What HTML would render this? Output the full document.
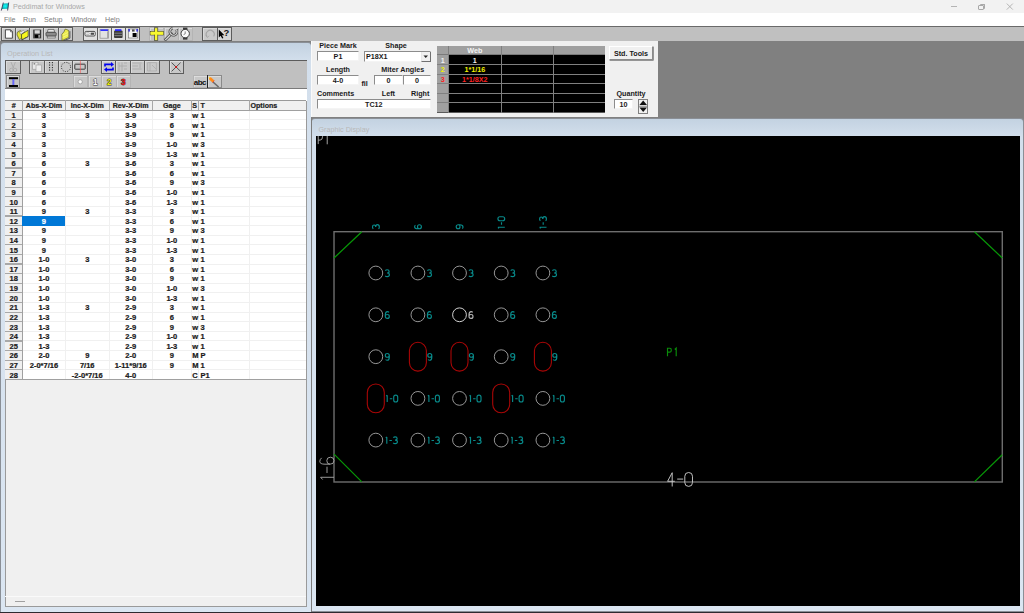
<!DOCTYPE html><html><head><meta charset="utf-8"><title>Peddimat for Windows</title><style>
*{margin:0;padding:0;box-sizing:border-box}
html,body{width:1024px;height:613px;overflow:hidden;background:#808080;font-family:"Liberation Sans",sans-serif}
.a{position:absolute}
.t{position:absolute;white-space:nowrap;line-height:1}
.b{-webkit-text-stroke:0.2px currentColor}
.btn{position:absolute;background:#c8c8c8;border:1px solid #5a5a5a;box-shadow:inset 1px 1px 0 #e8e8e8}
.frame{position:absolute;background:linear-gradient(#c3d2e1,#d3dfec 18px,#dbe6f2);border:1px solid #8a8f96;border-radius:4px 4px 0 0}
.tb td{}
</style></head><body>
<div class="a" style="left:0;top:0;width:1024px;height:13px;background:#f2f2f2"></div>
<svg class="a" style="left:0;top:0" width="12" height="13" viewBox="0 0 12 13"><defs><radialGradient id="tg" cx="0.5" cy="0.5" r="0.6"><stop offset="0" stop-color="#10ffff"/><stop offset="1" stop-color="#10a8a8"/></radialGradient></defs><path d="M3.1 3.6 L8.9 3.3 L8.1 8.7 L1.7 8.9 Z" fill="url(#tg)"/><path d="M3.3 2.6 L1.3 10.6 M8.7 2.5 L7.6 10.5" stroke="#3a3a5a" stroke-width="0.9" fill="none"/></svg>
<div class="t" style="left:12.6px;top:2.9px;font-size:7.7px;color:#a8a8a8;transform:scaleX(0.935);transform-origin:0 0">Peddimat for Windows</div>
<div class="a" style="left:951px;top:6.1px;width:6.2px;height:1px;background:#b4b4b4"></div>
<div class="a" style="left:978px;top:5px;width:6px;height:5px;border:1px solid #a8a8a8;border-radius:1px"></div>
<div class="a" style="left:980px;top:4px;width:5px;height:5px;border-top:1px solid #a8a8a8;border-right:1px solid #a8a8a8;border-radius:1px"></div>
<svg class="a" style="left:1006px;top:3px" width="8" height="8"><path d="M0.8 0.6 L6.8 6.6 M6.8 0.6 L0.8 6.6" stroke="#a6a6a6" stroke-width="0.8"/></svg>
<div class="a" style="left:0;top:12.7px;width:1024px;height:13px;background:#fff"></div>
<div class="t" style="left:3.90px;top:15.8px;font-size:7.9px;color:#7a7a7a;transform:scaleX(0.9);transform-origin:0 0">File</div>
<div class="t" style="left:23.20px;top:15.8px;font-size:7.9px;color:#7a7a7a;transform:scaleX(0.9);transform-origin:0 0">Run</div>
<div class="t" style="left:44.40px;top:15.8px;font-size:7.9px;color:#7a7a7a;transform:scaleX(0.9);transform-origin:0 0">Setup</div>
<div class="t" style="left:70.50px;top:15.8px;font-size:7.9px;color:#7a7a7a;transform:scaleX(0.9);transform-origin:0 0">Window</div>
<div class="t" style="left:105.30px;top:15.8px;font-size:7.9px;color:#7a7a7a;transform:scaleX(0.9);transform-origin:0 0">Help</div>
<div class="a" style="left:0;top:26.5px;width:1024px;height:14.7px;background:#c0c0c0"></div>
<div class="a" style="left:1.00px;top:26.80px;width:15.00px;height:14.00px;background:#c8c8c8;border:1.2px solid #5c5c5c;box-shadow:inset 0.7px 0.7px 0 #e2e2e2"></div>
<svg class="a" style="left:1.60px;top:26.80px" width="13.80" height="14.00" viewBox="0 0 13.80 14.00"><path d="M3.4 2.8 L8.6 2.8 L10.4 4.6 L10.4 11.2 L3.4 11.2 Z" fill="#fff" stroke="#3a3a3a" stroke-width="0.9" stroke-linejoin="round"/><path d="M8.4 2.8 L8.6 4.8 L10.4 4.8" fill="none" stroke="#3a3a3a" stroke-width="0.7"/></svg>
<div class="a" style="left:14.80px;top:26.80px;width:15.50px;height:14.00px;background:#c8c8c8;border:1.2px solid #5c5c5c;box-shadow:inset 0.7px 0.7px 0 #e2e2e2"></div>
<svg class="a" style="left:15.40px;top:26.80px" width="14.30" height="14.00" viewBox="0 0 14.30 14.00"><path d="M2.2 5.4 L5.2 3.6 L6.8 4.6 L7 11 L4.4 12.6 L2 8 Z" fill="#e8e830" stroke="#3a3a20" stroke-width="0.6"/><path d="M4.4 5.2 L8.4 3.4 L9.6 4.6 L6 7.6 Z" fill="#e6e6e6" stroke="#707070" stroke-width="0.5"/><path d="M6.4 7.4 L13.2 3.2 L13.2 9.6 L6.8 13 Z" fill="#f8f81c" stroke="#3a3a20" stroke-width="0.7"/><path d="M7 12.6 L13 9.4" stroke="#303060" stroke-width="0.8" stroke-dasharray="1 0.8"/></svg>
<div class="a" style="left:29.10px;top:26.80px;width:15.50px;height:14.00px;background:#c8c8c8;border:1.2px solid #5c5c5c;box-shadow:inset 0.7px 0.7px 0 #e2e2e2"></div>
<svg class="a" style="left:29.70px;top:26.80px" width="14.30" height="14.00" viewBox="0 0 14.30 14.00"><rect x="3.2" y="2.6" width="8" height="8.8" fill="#3c3c3c"/><rect x="4.6" y="3.2" width="5.2" height="3.4" fill="#d8d8d8"/><rect x="5" y="7.8" width="3.2" height="3" fill="#000"/><rect x="8.4" y="8" width="1.6" height="2.6" fill="#9a9a9a"/></svg>
<div class="a" style="left:43.40px;top:26.80px;width:15.80px;height:14.00px;background:#c8c8c8;border:1.2px solid #5c5c5c;box-shadow:inset 0.7px 0.7px 0 #e2e2e2"></div>
<svg class="a" style="left:44.00px;top:26.80px" width="14.60" height="14.00" viewBox="0 0 14.60 14.00"><path d="M4 2.4 L10 2.4 L10.6 5.2 L3.4 5.2 Z" fill="#e6e6e6" stroke="#505050" stroke-width="0.7"/><rect x="2" y="5.4" width="10.2" height="3.6" rx="0.8" fill="#8a8a8a" stroke="#3a3a3a" stroke-width="0.7"/><rect x="3.2" y="9.2" width="8" height="1.8" fill="#e0e0e0" stroke="#505050" stroke-width="0.6"/></svg>
<div class="a" style="left:58.00px;top:26.80px;width:15.20px;height:14.00px;background:#c8c8c8;border:1.2px solid #5c5c5c;box-shadow:inset 0.7px 0.7px 0 #e2e2e2"></div>
<svg class="a" style="left:58.60px;top:26.80px" width="14.00" height="14.00" viewBox="0 0 14.00 14.00"><g transform="translate(-1.4,0)"><path d="M4.2 7.2 L6.4 4.8 L7.6 2 L9.2 2.6 L11.2 3.6 L11.2 10.4 L4.4 13.6 Z" fill="#ecec4a" stroke="#4a4a20" stroke-width="0.6"/><path d="M5 8 L10.6 5.4 M5 10.4 L10.6 7.8" stroke="#f8f8a0" stroke-width="0.6"/><path d="M12.3 4.2 L12.3 11.2 L6 13.8" stroke="#4a4a4a" stroke-width="0.9" fill="none"/></g></svg>
<div class="a" style="left:82.60px;top:26.80px;width:15.30px;height:14.00px;background:#e0e0e0;border:1.2px solid #5c5c5c;box-shadow:inset 0.7px 0.7px 0 #e2e2e2"></div>
<svg class="a" style="left:83.20px;top:26.80px" width="14.10" height="14.00" viewBox="0 0 14.10 14.00"><rect x="2" y="4.4" width="10.2" height="4.6" rx="1.2" fill="#fff" stroke="#3a3a3a" stroke-width="0.9"/><rect x="7.6" y="5.6" width="3.4" height="2.2" fill="#4a4a4a"/><rect x="3.2" y="5.8" width="3.4" height="1.8" fill="#e0e0e0" stroke="#888" stroke-width="0.4"/></svg>
<div class="a" style="left:96.70px;top:26.80px;width:15.30px;height:14.00px;background:#e0e0e0;border:1.2px solid #5c5c5c;box-shadow:inset 0.7px 0.7px 0 #e2e2e2"></div>
<svg class="a" style="left:97.30px;top:26.80px" width="14.10" height="14.00" viewBox="0 0 14.10 14.00"><rect x="3" y="2.6" width="8.4" height="8.6" fill="#e2e2e2" stroke="#8a8a8a" stroke-width="0.7"/><rect x="3.4" y="2.4" width="7.6" height="1.6" fill="#3030ff"/><path d="M10.6 4.4 L10.6 11" stroke="#9a9a9a" stroke-width="0.9"/></svg>
<div class="a" style="left:110.80px;top:26.80px;width:15.70px;height:14.00px;background:#e0e0e0;border:1.2px solid #5c5c5c;box-shadow:inset 0.7px 0.7px 0 #e2e2e2"></div>
<svg class="a" style="left:111.40px;top:26.80px" width="14.50" height="14.00" viewBox="0 0 14.50 14.00"><rect x="3" y="3.4" width="8.6" height="7.6" rx="1" fill="#3a3a3a"/><rect x="4" y="2.2" width="6.4" height="1.8" fill="#2828ff"/><path d="M3.4 6.2 L11.2 6.2 M3.4 8.6 L11.2 8.6" stroke="#b0b0b0" stroke-width="0.6"/></svg>
<div class="a" style="left:125.30px;top:26.80px;width:14.90px;height:14.00px;background:#e0e0e0;border:1.2px solid #5c5c5c;box-shadow:inset 0.7px 0.7px 0 #e2e2e2"></div>
<svg class="a" style="left:125.90px;top:26.80px" width="13.70" height="14.00" viewBox="0 0 13.70 14.00"><rect x="2.4" y="2" width="9.4" height="9" fill="#f4f4f4" stroke="#6a6a6a" stroke-width="0.6"/><rect x="2.4" y="2" width="1.4" height="2.6" fill="#2020e0"/><rect x="10.4" y="2" width="1.4" height="2.6" fill="#2020e0"/><rect x="6" y="2.4" width="2.6" height="2.2" fill="#505050"/><rect x="6.6" y="6" width="4" height="4" fill="#000"/></svg>
<div class="a" style="left:148.70px;top:26.80px;width:15.80px;height:14.00px;background:#c2c2c2;border:1px solid #b4b4b4;box-shadow:inset 0.7px 0.7px 0 #e2e2e2"></div>
<svg class="a" style="left:149.20px;top:26.80px" width="14.80" height="14.00" viewBox="0 0 14.80 14.00"><rect x="1.2" y="4.4" width="13.4" height="3.6" fill="#f8f830" stroke="#2a2a2a" stroke-width="0.6"/><rect x="5.6" y="0.8" width="3.2" height="12.6" fill="#f8f830" stroke="#2a2a2a" stroke-width="0.6"/><rect x="1.6" y="4.8" width="12.6" height="2.8" fill="#f8f830"/></svg>
<div class="a" style="left:163.50px;top:26.80px;width:15.40px;height:14.00px;background:#c2c2c2;border:1px solid #b4b4b4;box-shadow:inset 0.7px 0.7px 0 #e2e2e2"></div>
<svg class="a" style="left:164.00px;top:26.80px" width="14.40" height="14.00" viewBox="0 0 14.40 14.00"><path d="M1.6 12.6 L7.4 6.8" stroke="#4a4a4a" stroke-width="2.8" stroke-linecap="round"/><path d="M1.6 12.6 L7.4 6.8" stroke="#dadada" stroke-width="1.3" stroke-linecap="round"/><path d="M12.4 2.6 A3.6 3.6 0 1 1 8.6 1.2" fill="none" stroke="#4a4a4a" stroke-width="2.6"/><path d="M12.4 2.6 A3.6 3.6 0 1 1 8.6 1.2" fill="none" stroke="#d6d6d6" stroke-width="1.1"/></svg>
<div class="a" style="left:177.90px;top:26.80px;width:14.80px;height:14.00px;background:#c2c2c2;border:1px solid #b4b4b4;box-shadow:inset 0.7px 0.7px 0 #e2e2e2"></div>
<svg class="a" style="left:178.40px;top:26.80px" width="13.80" height="14.00" viewBox="0 0 13.80 14.00"><rect x="5" y="0.6" width="4.4" height="3" fill="#3a3a3a"/><rect x="5" y="9.6" width="4.4" height="3" fill="#3a3a3a"/><circle cx="7.2" cy="6.6" r="4.2" fill="#fafafa" stroke="#404040" stroke-width="1"/><path d="M7.2 4.4 L7.2 6.8 L5.6 7.6" stroke="#555" stroke-width="0.7" fill="none"/></svg>
<div class="a" style="left:201.90px;top:26.80px;width:15.90px;height:14.00px;background:#cacaca;border:1.2px solid #5c5c5c;box-shadow:inset 0.7px 0.7px 0 #e2e2e2"></div>
<svg class="a" style="left:202.50px;top:26.80px" width="14.70" height="14.00" viewBox="0 0 14.70 14.00"><path d="M4 9.6 A4 4 0 1 1 10.6 9.4" fill="none" stroke="#a6a6a6" stroke-width="1.2"/><path d="M3 8.4 L4.4 10.6 L6 8.8" fill="none" stroke="#a6a6a6" stroke-width="0.8"/></svg>
<div class="a" style="left:216.60px;top:26.80px;width:15.00px;height:14.00px;background:#d4d4d4;border:1.2px solid #5c5c5c;box-shadow:inset 0.7px 0.7px 0 #e2e2e2"></div>
<svg class="a" style="left:217.20px;top:26.80px" width="13.80" height="14.00" viewBox="0 0 13.80 14.00"><path d="M1.8 2.6 L1.8 10.6 L3.6 8.8 L5.2 11.6 L6.4 11 L5 8.2 L7.4 8.2 Z" fill="#000"/><text x="6.6" y="9.4" font-family="Liberation Sans" font-weight="bold" font-size="9.5" fill="#111">?</text></svg>
<div class="a" style="left:0;top:25.6px;width:1024px;height:1px;background:#6a6a6a"></div>
<div class="frame" style="left:0;top:41.5px;width:312px;height:571px;border-right-color:#7c7c7c"></div>
<div class="t" style="left:7.1px;top:49.6px;font-size:7.3px;color:#b8b8b8">Operation List</div>
<div class="a" style="left:4.6px;top:59.5px;width:302.2px;height:547.2px;background:#f0f0f0;border:1px solid #9a9a9a"></div>
<div class="a" style="left:5px;top:59.8px;width:301.5px;height:15px;background:#c0c0c0;border-top:1px solid #5c5c5c"></div>
<div class="a" style="left:5px;top:74.5px;width:301.5px;height:14.6px;background:#c0c0c0;border-bottom:1.2px solid #7a7a7a"></div>
<div class="a" style="left:5.00px;top:60.20px;width:15.90px;height:14.10px;background:#c8c8c8;border:1.2px solid #5c5c5c;box-shadow:inset 0.7px 0.7px 0 #e2e2e2"></div>
<svg class="a" style="left:5.60px;top:60.20px" width="14.70" height="14.10" viewBox="0 0 14.70 14.10"><path d="M5 2 L7.4 8 M9.4 2 L7 8" stroke="#a8a8a8" stroke-width="0.8"/><circle cx="5.4" cy="10" r="1.8" fill="none" stroke="#a8a8a8" stroke-width="0.8"/><circle cx="9" cy="10" r="1.8" fill="none" stroke="#a8a8a8" stroke-width="0.8"/></svg>
<div class="a" style="left:29.00px;top:60.20px;width:16.00px;height:14.10px;background:#c8c8c8;border:1.2px solid #5c5c5c;box-shadow:inset 0.7px 0.7px 0 #e2e2e2"></div>
<svg class="a" style="left:29.60px;top:60.20px" width="14.80" height="14.10" viewBox="0 0 14.80 14.10"><rect x="2.6" y="2.2" width="5.4" height="7" fill="#e8e8e8" stroke="#9a9a9a" stroke-width="0.6"/><rect x="6" y="5" width="5.4" height="6.8" fill="#ececec" stroke="#9a9a9a" stroke-width="0.6"/><rect x="3.6" y="3" width="1.6" height="1.6" fill="#8a8a8a"/></svg>
<div class="a" style="left:43.80px;top:60.20px;width:15.30px;height:14.10px;background:#c8c8c8;border:1.2px solid #5c5c5c;box-shadow:inset 0.7px 0.7px 0 #e2e2e2"></div>
<svg class="a" style="left:44.40px;top:60.20px" width="14.10" height="14.10" viewBox="0 0 14.10 14.10"><path d="M5.6 2 L5.6 12 M8.4 2 L8.4 12" stroke="#2a2a2a" stroke-width="1" stroke-dasharray="1.2 1.3"/></svg>
<div class="a" style="left:57.90px;top:60.20px;width:15.70px;height:14.10px;background:#c8c8c8;border:1.2px solid #5c5c5c;box-shadow:inset 0.7px 0.7px 0 #e2e2e2"></div>
<svg class="a" style="left:58.50px;top:60.20px" width="14.50" height="14.10" viewBox="0 0 14.50 14.10"><circle cx="7" cy="7" r="4.6" fill="none" stroke="#2a2a2a" stroke-width="1" stroke-dasharray="1 1.4"/></svg>
<div class="a" style="left:72.40px;top:60.20px;width:15.20px;height:14.10px;background:#c8c8c8;border:1.2px solid #5c5c5c;box-shadow:inset 0.7px 0.7px 0 #e2e2e2"></div>
<svg class="a" style="left:73.00px;top:60.20px" width="14.00" height="14.10" viewBox="0 0 14.00 14.10"><rect x="1.8" y="4.2" width="10.4" height="5" rx="0.6" fill="#c8c8c8" stroke="#2a2a2a" stroke-width="0.9"/><path d="M7.4 0.6 L7.4 13.2" stroke="#ff5050" stroke-width="0.6"/></svg>
<div class="a" style="left:101.30px;top:60.20px;width:15.10px;height:14.10px;background:#c8c8c8;border:1.2px solid #5c5c5c;box-shadow:inset 0.7px 0.7px 0 #e2e2e2"></div>
<svg class="a" style="left:101.90px;top:60.20px" width="13.90" height="14.10" viewBox="0 0 13.90 14.10"><path d="M3 6.6 L3 4.4 L9.6 4.4" fill="none" stroke="#0000f0" stroke-width="1.6"/><path d="M9 2 L12 4.4 L9 6.8 Z" fill="#0000f0"/><path d="M11 7.4 L11 9.6 L4.4 9.6" fill="none" stroke="#0000f0" stroke-width="1.6"/><path d="M5 7.2 L2 9.6 L5 12 Z" fill="#0000f0"/></svg>
<div class="a" style="left:115.20px;top:60.20px;width:15.60px;height:14.10px;background:#c8c8c8;border:1.2px solid #5c5c5c;box-shadow:inset 0.7px 0.7px 0 #e2e2e2"></div>
<svg class="a" style="left:115.80px;top:60.20px" width="14.40" height="14.10" viewBox="0 0 14.40 14.10"><path d="M3 2.4 L3 11.4 M6 2.4 L6 11.4 M3 6 L11 6 M8 3 L11 3 M8 9 L11 9" stroke="#a8a8a8" stroke-width="0.8" fill="none"/></svg>
<div class="a" style="left:129.60px;top:60.20px;width:15.50px;height:14.10px;background:#c8c8c8;border:1.2px solid #5c5c5c;box-shadow:inset 0.7px 0.7px 0 #e2e2e2"></div>
<svg class="a" style="left:130.20px;top:60.20px" width="14.30" height="14.10" viewBox="0 0 14.30 14.10"><path d="M2.4 3 L11.6 3 M2.4 6 L8 6 M2.4 9 L11.6 9 M10 4 L10 8" stroke="#a8a8a8" stroke-width="0.8" fill="none"/></svg>
<div class="a" style="left:143.90px;top:60.20px;width:16.50px;height:14.10px;background:#c8c8c8;border:1.2px solid #5c5c5c;box-shadow:inset 0.7px 0.7px 0 #e2e2e2"></div>
<svg class="a" style="left:144.50px;top:60.20px" width="15.30" height="14.10" viewBox="0 0 15.30 14.10"><path d="M2.6 2.6 L11.4 2.6 L11.4 11 L2.6 11 Z M5 2.6 L5 11 M7 5 L11 9" stroke="#a8a8a8" stroke-width="0.7" fill="none"/></svg>
<div class="a" style="left:168.50px;top:60.20px;width:15.60px;height:14.10px;background:#c8c8c8;border:1.2px solid #5c5c5c;box-shadow:inset 0.7px 0.7px 0 #e2e2e2"></div>
<svg class="a" style="left:169.10px;top:60.20px" width="14.40" height="14.10" viewBox="0 0 14.40 14.10"><path d="M2.6 2.6 L11.6 11.4 M11.6 2.6 L2.6 11.4" stroke="#333" stroke-width="0.8"/><circle cx="7.1" cy="7" r="0.9" fill="#f00000"/></svg>
<div class="a" style="left:5.50px;top:74.60px;width:14.80px;height:13.40px;background:#c4c4c4;border:1px solid #8a8a8a;box-shadow:inset 0.7px 0.7px 0 #e2e2e2"></div>
<svg class="a" style="left:6.00px;top:74.60px" width="13.80" height="13.40" viewBox="0 0 13.80 13.40"><rect x="3" y="2.2" width="9" height="2" fill="#000"/><rect x="3" y="10" width="9" height="2" fill="#000"/><rect x="6.6" y="4" width="1.6" height="6" fill="#3030ff"/><rect x="7" y="4" width="0.5" height="6" fill="#a0a0ff"/></svg>
<div class="a" style="left:72.70px;top:74.60px;width:15.80px;height:13.40px;background:#c6c6c6;border:1px solid #b4b4b4;box-shadow:inset 0.7px 0.7px 0 #e2e2e2"></div>
<svg class="a" style="left:73.20px;top:74.60px" width="14.80" height="13.40" viewBox="0 0 14.80 13.40"><circle cx="7.2" cy="6.8" r="2.1" fill="#fafafa" stroke="#8a8a8a" stroke-width="0.6"/></svg>
<div class="a" style="left:87.50px;top:74.60px;width:14.60px;height:13.40px;background:#c6c6c6;border:1px solid #b4b4b4;box-shadow:inset 0.7px 0.7px 0 #e2e2e2"></div>
<svg class="a" style="left:88.00px;top:74.60px" width="13.60" height="13.40" viewBox="0 0 13.60 13.40"><text x="7.3" y="10" text-anchor="middle" font-family="Liberation Sans" font-weight="bold" font-size="8.2" fill="#fafafa" stroke="#404040" stroke-width="0.9" paint-order="stroke">1</text></svg>
<div class="a" style="left:101.10px;top:74.60px;width:15.70px;height:13.40px;background:#c6c6c6;border:1px solid #b4b4b4;box-shadow:inset 0.7px 0.7px 0 #e2e2e2"></div>
<svg class="a" style="left:101.60px;top:74.60px" width="14.70" height="13.40" viewBox="0 0 14.70 13.40"><text x="7.3" y="10" text-anchor="middle" font-family="Liberation Sans" font-weight="bold" font-size="8.2" fill="#f0f000" stroke="#404040" stroke-width="0.9" paint-order="stroke">2</text></svg>
<div class="a" style="left:115.80px;top:74.60px;width:15.50px;height:13.40px;background:#c6c6c6;border:1px solid #b4b4b4;box-shadow:inset 0.7px 0.7px 0 #e2e2e2"></div>
<svg class="a" style="left:116.30px;top:74.60px" width="14.50" height="13.40" viewBox="0 0 14.50 13.40"><text x="7.3" y="10" text-anchor="middle" font-family="Liberation Sans" font-weight="bold" font-size="8.2" fill="#f01010" stroke="#404040" stroke-width="0.9" paint-order="stroke">3</text></svg>
<div class="a" style="left:192.90px;top:74.70px;width:15.00px;height:13.70px;background:#c8c8c8;border:1px solid #b4b4b4;box-shadow:inset 0.7px 0.7px 0 #e2e2e2"></div>
<svg class="a" style="left:193.40px;top:74.70px" width="14.00" height="13.70" viewBox="0 0 14.00 13.70"><text x="6.9" y="10" text-anchor="middle" font-family="Liberation Sans" font-weight="bold" font-size="8" fill="#111" letter-spacing="-0.5">abc</text></svg>
<div class="a" style="left:206.90px;top:74.70px;width:15.50px;height:13.70px;background:#c8c8c8;border:1px solid #8a8a8a;box-shadow:inset 0.7px 0.7px 0 #e2e2e2"></div>
<svg class="a" style="left:207.40px;top:74.70px" width="14.50" height="13.70" viewBox="0 0 14.50 13.70"><path d="M6 7 L11.6 12" stroke="#6a6a6a" stroke-width="1.6"/><path d="M1.8 1.8 L4.2 2.4 L7.4 5.6 L5.4 7.6 L2.2 4.4 Z" fill="#ff8a18"/><path d="M1.8 1.8 L3.6 2.2 L2.2 3.6 Z" fill="#ffe030"/><path d="M7.4 5.6 L5.4 7.6" stroke="#e02020" stroke-width="0.6"/></svg>
<div class="a" style="left:206.6px;top:75px;width:1.4px;height:13.4px;background:#222"></div>
<div class="a" style="left:5px;top:89px;width:301.5px;height:11.5px;background:#fff"></div>
<div class="a" style="left:22.4px;top:110.3px;width:283.90000000000003px;height:269.08px;background:#fff"></div>
<div class="a" style="left:5px;top:110.3px;width:17.4px;height:269.08px;background:#f0f0f0"></div>
<div class="a" style="left:5px;top:100.0px;width:301.3px;height:10.299999999999997px;background:#f0f0f0;border-top:1px solid #9a9a9a"></div>
<div class="a" style="left:21.90px;top:100.0px;width:1px;height:10.299999999999997px;background:#a8a8a8"></div>
<div class="a" style="left:21.80px;top:110.3px;width:1.2px;height:269.08px;background:#a0a0a0"></div>
<div class="a" style="left:65.00px;top:100.0px;width:1px;height:10.299999999999997px;background:#a8a8a8"></div>
<div class="a" style="left:65.00px;top:110.3px;width:1px;height:269.08px;background:#f0f0f0"></div>
<div class="a" style="left:108.50px;top:100.0px;width:1px;height:10.299999999999997px;background:#a8a8a8"></div>
<div class="a" style="left:108.50px;top:110.3px;width:1px;height:269.08px;background:#f0f0f0"></div>
<div class="a" style="left:151.90px;top:100.0px;width:1px;height:10.299999999999997px;background:#a8a8a8"></div>
<div class="a" style="left:151.90px;top:110.3px;width:1px;height:269.08px;background:#f0f0f0"></div>
<div class="a" style="left:190.80px;top:100.0px;width:1px;height:10.299999999999997px;background:#a8a8a8"></div>
<div class="a" style="left:190.80px;top:110.3px;width:1px;height:269.08px;background:#f0f0f0"></div>
<div class="a" style="left:197.90px;top:100.0px;width:1px;height:10.299999999999997px;background:#a8a8a8"></div>
<div class="a" style="left:197.90px;top:110.3px;width:1px;height:269.08px;background:#f0f0f0"></div>
<div class="a" style="left:249.00px;top:100.0px;width:1px;height:10.299999999999997px;background:#a8a8a8"></div>
<div class="a" style="left:249.00px;top:110.3px;width:1px;height:269.08px;background:#f0f0f0"></div>
<div class="a" style="left:5px;top:109.70px;width:301.3px;height:1.2px;background:#a0a0a0"></div>
<div class="a" style="left:5px;top:119.31px;width:17.4px;height:1.2px;background:#a8a8a8"></div>
<div class="a" style="left:23px;top:119.41px;width:283.3px;height:1px;background:#f0f0f0"></div>
<div class="a" style="left:5px;top:128.92px;width:17.4px;height:1.2px;background:#a8a8a8"></div>
<div class="a" style="left:23px;top:129.02px;width:283.3px;height:1px;background:#f0f0f0"></div>
<div class="a" style="left:5px;top:138.53px;width:17.4px;height:1.2px;background:#a8a8a8"></div>
<div class="a" style="left:23px;top:138.63px;width:283.3px;height:1px;background:#f0f0f0"></div>
<div class="a" style="left:5px;top:148.14px;width:17.4px;height:1.2px;background:#a8a8a8"></div>
<div class="a" style="left:23px;top:148.24px;width:283.3px;height:1px;background:#f0f0f0"></div>
<div class="a" style="left:5px;top:157.75px;width:17.4px;height:1.2px;background:#a8a8a8"></div>
<div class="a" style="left:23px;top:157.85px;width:283.3px;height:1px;background:#f0f0f0"></div>
<div class="a" style="left:5px;top:167.36px;width:17.4px;height:1.2px;background:#a8a8a8"></div>
<div class="a" style="left:23px;top:167.46px;width:283.3px;height:1px;background:#f0f0f0"></div>
<div class="a" style="left:5px;top:176.97px;width:17.4px;height:1.2px;background:#a8a8a8"></div>
<div class="a" style="left:23px;top:177.07px;width:283.3px;height:1px;background:#f0f0f0"></div>
<div class="a" style="left:5px;top:186.58px;width:17.4px;height:1.2px;background:#a8a8a8"></div>
<div class="a" style="left:23px;top:186.68px;width:283.3px;height:1px;background:#f0f0f0"></div>
<div class="a" style="left:5px;top:196.19px;width:17.4px;height:1.2px;background:#a8a8a8"></div>
<div class="a" style="left:23px;top:196.29px;width:283.3px;height:1px;background:#f0f0f0"></div>
<div class="a" style="left:5px;top:205.80px;width:17.4px;height:1.2px;background:#a8a8a8"></div>
<div class="a" style="left:23px;top:205.90px;width:283.3px;height:1px;background:#f0f0f0"></div>
<div class="a" style="left:5px;top:215.41px;width:17.4px;height:1.2px;background:#a8a8a8"></div>
<div class="a" style="left:23px;top:215.51px;width:283.3px;height:1px;background:#f0f0f0"></div>
<div class="a" style="left:5px;top:225.02px;width:17.4px;height:1.2px;background:#a8a8a8"></div>
<div class="a" style="left:23px;top:225.12px;width:283.3px;height:1px;background:#f0f0f0"></div>
<div class="a" style="left:5px;top:234.63px;width:17.4px;height:1.2px;background:#a8a8a8"></div>
<div class="a" style="left:23px;top:234.73px;width:283.3px;height:1px;background:#f0f0f0"></div>
<div class="a" style="left:5px;top:244.24px;width:17.4px;height:1.2px;background:#a8a8a8"></div>
<div class="a" style="left:23px;top:244.34px;width:283.3px;height:1px;background:#f0f0f0"></div>
<div class="a" style="left:5px;top:253.85px;width:17.4px;height:1.2px;background:#a8a8a8"></div>
<div class="a" style="left:23px;top:253.95px;width:283.3px;height:1px;background:#f0f0f0"></div>
<div class="a" style="left:5px;top:263.46px;width:17.4px;height:1.2px;background:#a8a8a8"></div>
<div class="a" style="left:23px;top:263.56px;width:283.3px;height:1px;background:#f0f0f0"></div>
<div class="a" style="left:5px;top:273.07px;width:17.4px;height:1.2px;background:#a8a8a8"></div>
<div class="a" style="left:23px;top:273.17px;width:283.3px;height:1px;background:#f0f0f0"></div>
<div class="a" style="left:5px;top:282.68px;width:17.4px;height:1.2px;background:#a8a8a8"></div>
<div class="a" style="left:23px;top:282.78px;width:283.3px;height:1px;background:#f0f0f0"></div>
<div class="a" style="left:5px;top:292.29px;width:17.4px;height:1.2px;background:#a8a8a8"></div>
<div class="a" style="left:23px;top:292.39px;width:283.3px;height:1px;background:#f0f0f0"></div>
<div class="a" style="left:5px;top:301.90px;width:17.4px;height:1.2px;background:#a8a8a8"></div>
<div class="a" style="left:23px;top:302.00px;width:283.3px;height:1px;background:#f0f0f0"></div>
<div class="a" style="left:5px;top:311.51px;width:17.4px;height:1.2px;background:#a8a8a8"></div>
<div class="a" style="left:23px;top:311.61px;width:283.3px;height:1px;background:#f0f0f0"></div>
<div class="a" style="left:5px;top:321.12px;width:17.4px;height:1.2px;background:#a8a8a8"></div>
<div class="a" style="left:23px;top:321.22px;width:283.3px;height:1px;background:#f0f0f0"></div>
<div class="a" style="left:5px;top:330.73px;width:17.4px;height:1.2px;background:#a8a8a8"></div>
<div class="a" style="left:23px;top:330.83px;width:283.3px;height:1px;background:#f0f0f0"></div>
<div class="a" style="left:5px;top:340.34px;width:17.4px;height:1.2px;background:#a8a8a8"></div>
<div class="a" style="left:23px;top:340.44px;width:283.3px;height:1px;background:#f0f0f0"></div>
<div class="a" style="left:5px;top:349.95px;width:17.4px;height:1.2px;background:#a8a8a8"></div>
<div class="a" style="left:23px;top:350.05px;width:283.3px;height:1px;background:#f0f0f0"></div>
<div class="a" style="left:5px;top:359.56px;width:17.4px;height:1.2px;background:#a8a8a8"></div>
<div class="a" style="left:23px;top:359.66px;width:283.3px;height:1px;background:#f0f0f0"></div>
<div class="a" style="left:5px;top:369.17px;width:17.4px;height:1.2px;background:#a8a8a8"></div>
<div class="a" style="left:23px;top:369.27px;width:283.3px;height:1px;background:#f0f0f0"></div>
<div class="a" style="left:5px;top:378.78px;width:301.3px;height:1.2px;background:#a0a0a0"></div>
<div class="a" style="left:22.4px;top:216.01px;width:43.1px;height:9.61px;background:#0078d7"></div>
<div class="t" style="left:5px;width:17.40px;top:102.60px;font-size:7.1px;font-weight:bold;color:#222;text-align:center;-webkit-text-stroke:0.22px #222">#</div>
<div class="t" style="left:22.4px;width:43.10px;top:102.60px;font-size:7.1px;font-weight:bold;color:#222;text-align:center;-webkit-text-stroke:0.22px #222">Abs-X-Dim</div>
<div class="t" style="left:65.5px;width:43.50px;top:102.60px;font-size:7.1px;font-weight:bold;color:#222;text-align:center;-webkit-text-stroke:0.22px #222">Inc-X-Dim</div>
<div class="t" style="left:109px;width:43.40px;top:102.60px;font-size:7.1px;font-weight:bold;color:#222;text-align:center;-webkit-text-stroke:0.22px #222">Rev-X-Dim</div>
<div class="t" style="left:152.4px;width:38.90px;top:102.60px;font-size:7.1px;font-weight:bold;color:#222;text-align:center;-webkit-text-stroke:0.22px #222">Gage</div>
<div class="t" style="left:192.30px;top:102.60px;font-size:7.1px;font-weight:bold;color:#222;-webkit-text-stroke:0.22px #222">S</div>
<div class="t" style="left:200.40px;top:102.60px;font-size:7.1px;font-weight:bold;color:#222;-webkit-text-stroke:0.22px #222">T</div>
<div class="t" style="left:250.50px;top:102.60px;font-size:7.1px;font-weight:bold;color:#222;-webkit-text-stroke:0.22px #222">Options</div>
<div class="t" style="left:5px;width:17.40px;top:112.10px;font-size:7.5px;font-weight:bold;color:#1a1a1a;text-align:center;-webkit-text-stroke:0.22px #1a1a1a">1</div>
<div class="t" style="left:22.4px;width:43.10px;top:112.10px;font-size:7.5px;font-weight:bold;color:#1a1a1a;text-align:center;-webkit-text-stroke:0.22px #1a1a1a">3</div>
<div class="t" style="left:65.5px;width:43.50px;top:112.10px;font-size:7.5px;font-weight:bold;color:#1a1a1a;text-align:center;-webkit-text-stroke:0.22px #1a1a1a">3</div>
<div class="t" style="left:109px;width:43.40px;top:112.10px;font-size:7.5px;font-weight:bold;color:#1a1a1a;text-align:center;-webkit-text-stroke:0.22px #1a1a1a">3-9</div>
<div class="t" style="left:152.4px;width:38.90px;top:112.10px;font-size:7.5px;font-weight:bold;color:#1a1a1a;text-align:center;-webkit-text-stroke:0.22px #1a1a1a">3</div>
<div class="t" style="left:192.30px;top:112.10px;font-size:7.5px;font-weight:bold;color:#1a1a1a;-webkit-text-stroke:0.22px #1a1a1a">w</div>
<div class="t" style="left:200.40px;top:112.10px;font-size:7.5px;font-weight:bold;color:#1a1a1a;-webkit-text-stroke:0.22px #1a1a1a">1</div>
<div class="t" style="left:5px;width:17.40px;top:121.71px;font-size:7.5px;font-weight:bold;color:#1a1a1a;text-align:center;-webkit-text-stroke:0.22px #1a1a1a">2</div>
<div class="t" style="left:22.4px;width:43.10px;top:121.71px;font-size:7.5px;font-weight:bold;color:#1a1a1a;text-align:center;-webkit-text-stroke:0.22px #1a1a1a">3</div>
<div class="t" style="left:109px;width:43.40px;top:121.71px;font-size:7.5px;font-weight:bold;color:#1a1a1a;text-align:center;-webkit-text-stroke:0.22px #1a1a1a">3-9</div>
<div class="t" style="left:152.4px;width:38.90px;top:121.71px;font-size:7.5px;font-weight:bold;color:#1a1a1a;text-align:center;-webkit-text-stroke:0.22px #1a1a1a">6</div>
<div class="t" style="left:192.30px;top:121.71px;font-size:7.5px;font-weight:bold;color:#1a1a1a;-webkit-text-stroke:0.22px #1a1a1a">w</div>
<div class="t" style="left:200.40px;top:121.71px;font-size:7.5px;font-weight:bold;color:#1a1a1a;-webkit-text-stroke:0.22px #1a1a1a">1</div>
<div class="t" style="left:5px;width:17.40px;top:131.32px;font-size:7.5px;font-weight:bold;color:#1a1a1a;text-align:center;-webkit-text-stroke:0.22px #1a1a1a">3</div>
<div class="t" style="left:22.4px;width:43.10px;top:131.32px;font-size:7.5px;font-weight:bold;color:#1a1a1a;text-align:center;-webkit-text-stroke:0.22px #1a1a1a">3</div>
<div class="t" style="left:109px;width:43.40px;top:131.32px;font-size:7.5px;font-weight:bold;color:#1a1a1a;text-align:center;-webkit-text-stroke:0.22px #1a1a1a">3-9</div>
<div class="t" style="left:152.4px;width:38.90px;top:131.32px;font-size:7.5px;font-weight:bold;color:#1a1a1a;text-align:center;-webkit-text-stroke:0.22px #1a1a1a">9</div>
<div class="t" style="left:192.30px;top:131.32px;font-size:7.5px;font-weight:bold;color:#1a1a1a;-webkit-text-stroke:0.22px #1a1a1a">w</div>
<div class="t" style="left:200.40px;top:131.32px;font-size:7.5px;font-weight:bold;color:#1a1a1a;-webkit-text-stroke:0.22px #1a1a1a">1</div>
<div class="t" style="left:5px;width:17.40px;top:140.93px;font-size:7.5px;font-weight:bold;color:#1a1a1a;text-align:center;-webkit-text-stroke:0.22px #1a1a1a">4</div>
<div class="t" style="left:22.4px;width:43.10px;top:140.93px;font-size:7.5px;font-weight:bold;color:#1a1a1a;text-align:center;-webkit-text-stroke:0.22px #1a1a1a">3</div>
<div class="t" style="left:109px;width:43.40px;top:140.93px;font-size:7.5px;font-weight:bold;color:#1a1a1a;text-align:center;-webkit-text-stroke:0.22px #1a1a1a">3-9</div>
<div class="t" style="left:152.4px;width:38.90px;top:140.93px;font-size:7.5px;font-weight:bold;color:#1a1a1a;text-align:center;-webkit-text-stroke:0.22px #1a1a1a">1-0</div>
<div class="t" style="left:192.30px;top:140.93px;font-size:7.5px;font-weight:bold;color:#1a1a1a;-webkit-text-stroke:0.22px #1a1a1a">w</div>
<div class="t" style="left:200.40px;top:140.93px;font-size:7.5px;font-weight:bold;color:#1a1a1a;-webkit-text-stroke:0.22px #1a1a1a">3</div>
<div class="t" style="left:5px;width:17.40px;top:150.54px;font-size:7.5px;font-weight:bold;color:#1a1a1a;text-align:center;-webkit-text-stroke:0.22px #1a1a1a">5</div>
<div class="t" style="left:22.4px;width:43.10px;top:150.54px;font-size:7.5px;font-weight:bold;color:#1a1a1a;text-align:center;-webkit-text-stroke:0.22px #1a1a1a">3</div>
<div class="t" style="left:109px;width:43.40px;top:150.54px;font-size:7.5px;font-weight:bold;color:#1a1a1a;text-align:center;-webkit-text-stroke:0.22px #1a1a1a">3-9</div>
<div class="t" style="left:152.4px;width:38.90px;top:150.54px;font-size:7.5px;font-weight:bold;color:#1a1a1a;text-align:center;-webkit-text-stroke:0.22px #1a1a1a">1-3</div>
<div class="t" style="left:192.30px;top:150.54px;font-size:7.5px;font-weight:bold;color:#1a1a1a;-webkit-text-stroke:0.22px #1a1a1a">w</div>
<div class="t" style="left:200.40px;top:150.54px;font-size:7.5px;font-weight:bold;color:#1a1a1a;-webkit-text-stroke:0.22px #1a1a1a">1</div>
<div class="t" style="left:5px;width:17.40px;top:160.15px;font-size:7.5px;font-weight:bold;color:#1a1a1a;text-align:center;-webkit-text-stroke:0.22px #1a1a1a">6</div>
<div class="t" style="left:22.4px;width:43.10px;top:160.15px;font-size:7.5px;font-weight:bold;color:#1a1a1a;text-align:center;-webkit-text-stroke:0.22px #1a1a1a">6</div>
<div class="t" style="left:65.5px;width:43.50px;top:160.15px;font-size:7.5px;font-weight:bold;color:#1a1a1a;text-align:center;-webkit-text-stroke:0.22px #1a1a1a">3</div>
<div class="t" style="left:109px;width:43.40px;top:160.15px;font-size:7.5px;font-weight:bold;color:#1a1a1a;text-align:center;-webkit-text-stroke:0.22px #1a1a1a">3-6</div>
<div class="t" style="left:152.4px;width:38.90px;top:160.15px;font-size:7.5px;font-weight:bold;color:#1a1a1a;text-align:center;-webkit-text-stroke:0.22px #1a1a1a">3</div>
<div class="t" style="left:192.30px;top:160.15px;font-size:7.5px;font-weight:bold;color:#1a1a1a;-webkit-text-stroke:0.22px #1a1a1a">w</div>
<div class="t" style="left:200.40px;top:160.15px;font-size:7.5px;font-weight:bold;color:#1a1a1a;-webkit-text-stroke:0.22px #1a1a1a">1</div>
<div class="t" style="left:5px;width:17.40px;top:169.76px;font-size:7.5px;font-weight:bold;color:#1a1a1a;text-align:center;-webkit-text-stroke:0.22px #1a1a1a">7</div>
<div class="t" style="left:22.4px;width:43.10px;top:169.76px;font-size:7.5px;font-weight:bold;color:#1a1a1a;text-align:center;-webkit-text-stroke:0.22px #1a1a1a">6</div>
<div class="t" style="left:109px;width:43.40px;top:169.76px;font-size:7.5px;font-weight:bold;color:#1a1a1a;text-align:center;-webkit-text-stroke:0.22px #1a1a1a">3-6</div>
<div class="t" style="left:152.4px;width:38.90px;top:169.76px;font-size:7.5px;font-weight:bold;color:#1a1a1a;text-align:center;-webkit-text-stroke:0.22px #1a1a1a">6</div>
<div class="t" style="left:192.30px;top:169.76px;font-size:7.5px;font-weight:bold;color:#1a1a1a;-webkit-text-stroke:0.22px #1a1a1a">w</div>
<div class="t" style="left:200.40px;top:169.76px;font-size:7.5px;font-weight:bold;color:#1a1a1a;-webkit-text-stroke:0.22px #1a1a1a">1</div>
<div class="t" style="left:5px;width:17.40px;top:179.37px;font-size:7.5px;font-weight:bold;color:#1a1a1a;text-align:center;-webkit-text-stroke:0.22px #1a1a1a">8</div>
<div class="t" style="left:22.4px;width:43.10px;top:179.37px;font-size:7.5px;font-weight:bold;color:#1a1a1a;text-align:center;-webkit-text-stroke:0.22px #1a1a1a">6</div>
<div class="t" style="left:109px;width:43.40px;top:179.37px;font-size:7.5px;font-weight:bold;color:#1a1a1a;text-align:center;-webkit-text-stroke:0.22px #1a1a1a">3-6</div>
<div class="t" style="left:152.4px;width:38.90px;top:179.37px;font-size:7.5px;font-weight:bold;color:#1a1a1a;text-align:center;-webkit-text-stroke:0.22px #1a1a1a">9</div>
<div class="t" style="left:192.30px;top:179.37px;font-size:7.5px;font-weight:bold;color:#1a1a1a;-webkit-text-stroke:0.22px #1a1a1a">w</div>
<div class="t" style="left:200.40px;top:179.37px;font-size:7.5px;font-weight:bold;color:#1a1a1a;-webkit-text-stroke:0.22px #1a1a1a">3</div>
<div class="t" style="left:5px;width:17.40px;top:188.98px;font-size:7.5px;font-weight:bold;color:#1a1a1a;text-align:center;-webkit-text-stroke:0.22px #1a1a1a">9</div>
<div class="t" style="left:22.4px;width:43.10px;top:188.98px;font-size:7.5px;font-weight:bold;color:#1a1a1a;text-align:center;-webkit-text-stroke:0.22px #1a1a1a">6</div>
<div class="t" style="left:109px;width:43.40px;top:188.98px;font-size:7.5px;font-weight:bold;color:#1a1a1a;text-align:center;-webkit-text-stroke:0.22px #1a1a1a">3-6</div>
<div class="t" style="left:152.4px;width:38.90px;top:188.98px;font-size:7.5px;font-weight:bold;color:#1a1a1a;text-align:center;-webkit-text-stroke:0.22px #1a1a1a">1-0</div>
<div class="t" style="left:192.30px;top:188.98px;font-size:7.5px;font-weight:bold;color:#1a1a1a;-webkit-text-stroke:0.22px #1a1a1a">w</div>
<div class="t" style="left:200.40px;top:188.98px;font-size:7.5px;font-weight:bold;color:#1a1a1a;-webkit-text-stroke:0.22px #1a1a1a">1</div>
<div class="t" style="left:5px;width:17.40px;top:198.59px;font-size:7.5px;font-weight:bold;color:#1a1a1a;text-align:center;-webkit-text-stroke:0.22px #1a1a1a">10</div>
<div class="t" style="left:22.4px;width:43.10px;top:198.59px;font-size:7.5px;font-weight:bold;color:#1a1a1a;text-align:center;-webkit-text-stroke:0.22px #1a1a1a">6</div>
<div class="t" style="left:109px;width:43.40px;top:198.59px;font-size:7.5px;font-weight:bold;color:#1a1a1a;text-align:center;-webkit-text-stroke:0.22px #1a1a1a">3-6</div>
<div class="t" style="left:152.4px;width:38.90px;top:198.59px;font-size:7.5px;font-weight:bold;color:#1a1a1a;text-align:center;-webkit-text-stroke:0.22px #1a1a1a">1-3</div>
<div class="t" style="left:192.30px;top:198.59px;font-size:7.5px;font-weight:bold;color:#1a1a1a;-webkit-text-stroke:0.22px #1a1a1a">w</div>
<div class="t" style="left:200.40px;top:198.59px;font-size:7.5px;font-weight:bold;color:#1a1a1a;-webkit-text-stroke:0.22px #1a1a1a">1</div>
<div class="t" style="left:5px;width:17.40px;top:208.20px;font-size:7.5px;font-weight:bold;color:#1a1a1a;text-align:center;-webkit-text-stroke:0.22px #1a1a1a">11</div>
<div class="t" style="left:22.4px;width:43.10px;top:208.20px;font-size:7.5px;font-weight:bold;color:#1a1a1a;text-align:center;-webkit-text-stroke:0.22px #1a1a1a">9</div>
<div class="t" style="left:65.5px;width:43.50px;top:208.20px;font-size:7.5px;font-weight:bold;color:#1a1a1a;text-align:center;-webkit-text-stroke:0.22px #1a1a1a">3</div>
<div class="t" style="left:109px;width:43.40px;top:208.20px;font-size:7.5px;font-weight:bold;color:#1a1a1a;text-align:center;-webkit-text-stroke:0.22px #1a1a1a">3-3</div>
<div class="t" style="left:152.4px;width:38.90px;top:208.20px;font-size:7.5px;font-weight:bold;color:#1a1a1a;text-align:center;-webkit-text-stroke:0.22px #1a1a1a">3</div>
<div class="t" style="left:192.30px;top:208.20px;font-size:7.5px;font-weight:bold;color:#1a1a1a;-webkit-text-stroke:0.22px #1a1a1a">w</div>
<div class="t" style="left:200.40px;top:208.20px;font-size:7.5px;font-weight:bold;color:#1a1a1a;-webkit-text-stroke:0.22px #1a1a1a">1</div>
<div class="t" style="left:5px;width:17.40px;top:217.81px;font-size:7.5px;font-weight:bold;color:#1a1a1a;text-align:center;-webkit-text-stroke:0.22px #1a1a1a">12</div>
<div class="t" style="left:22.4px;width:43.10px;top:217.81px;font-size:7.5px;font-weight:bold;color:#fff;text-align:center;-webkit-text-stroke:0.22px #fff">9</div>
<div class="t" style="left:109px;width:43.40px;top:217.81px;font-size:7.5px;font-weight:bold;color:#1a1a1a;text-align:center;-webkit-text-stroke:0.22px #1a1a1a">3-3</div>
<div class="t" style="left:152.4px;width:38.90px;top:217.81px;font-size:7.5px;font-weight:bold;color:#1a1a1a;text-align:center;-webkit-text-stroke:0.22px #1a1a1a">6</div>
<div class="t" style="left:192.30px;top:217.81px;font-size:7.5px;font-weight:bold;color:#1a1a1a;-webkit-text-stroke:0.22px #1a1a1a">w</div>
<div class="t" style="left:200.40px;top:217.81px;font-size:7.5px;font-weight:bold;color:#1a1a1a;-webkit-text-stroke:0.22px #1a1a1a">1</div>
<div class="t" style="left:5px;width:17.40px;top:227.42px;font-size:7.5px;font-weight:bold;color:#1a1a1a;text-align:center;-webkit-text-stroke:0.22px #1a1a1a">13</div>
<div class="t" style="left:22.4px;width:43.10px;top:227.42px;font-size:7.5px;font-weight:bold;color:#1a1a1a;text-align:center;-webkit-text-stroke:0.22px #1a1a1a">9</div>
<div class="t" style="left:109px;width:43.40px;top:227.42px;font-size:7.5px;font-weight:bold;color:#1a1a1a;text-align:center;-webkit-text-stroke:0.22px #1a1a1a">3-3</div>
<div class="t" style="left:152.4px;width:38.90px;top:227.42px;font-size:7.5px;font-weight:bold;color:#1a1a1a;text-align:center;-webkit-text-stroke:0.22px #1a1a1a">9</div>
<div class="t" style="left:192.30px;top:227.42px;font-size:7.5px;font-weight:bold;color:#1a1a1a;-webkit-text-stroke:0.22px #1a1a1a">w</div>
<div class="t" style="left:200.40px;top:227.42px;font-size:7.5px;font-weight:bold;color:#1a1a1a;-webkit-text-stroke:0.22px #1a1a1a">3</div>
<div class="t" style="left:5px;width:17.40px;top:237.03px;font-size:7.5px;font-weight:bold;color:#1a1a1a;text-align:center;-webkit-text-stroke:0.22px #1a1a1a">14</div>
<div class="t" style="left:22.4px;width:43.10px;top:237.03px;font-size:7.5px;font-weight:bold;color:#1a1a1a;text-align:center;-webkit-text-stroke:0.22px #1a1a1a">9</div>
<div class="t" style="left:109px;width:43.40px;top:237.03px;font-size:7.5px;font-weight:bold;color:#1a1a1a;text-align:center;-webkit-text-stroke:0.22px #1a1a1a">3-3</div>
<div class="t" style="left:152.4px;width:38.90px;top:237.03px;font-size:7.5px;font-weight:bold;color:#1a1a1a;text-align:center;-webkit-text-stroke:0.22px #1a1a1a">1-0</div>
<div class="t" style="left:192.30px;top:237.03px;font-size:7.5px;font-weight:bold;color:#1a1a1a;-webkit-text-stroke:0.22px #1a1a1a">w</div>
<div class="t" style="left:200.40px;top:237.03px;font-size:7.5px;font-weight:bold;color:#1a1a1a;-webkit-text-stroke:0.22px #1a1a1a">1</div>
<div class="t" style="left:5px;width:17.40px;top:246.64px;font-size:7.5px;font-weight:bold;color:#1a1a1a;text-align:center;-webkit-text-stroke:0.22px #1a1a1a">15</div>
<div class="t" style="left:22.4px;width:43.10px;top:246.64px;font-size:7.5px;font-weight:bold;color:#1a1a1a;text-align:center;-webkit-text-stroke:0.22px #1a1a1a">9</div>
<div class="t" style="left:109px;width:43.40px;top:246.64px;font-size:7.5px;font-weight:bold;color:#1a1a1a;text-align:center;-webkit-text-stroke:0.22px #1a1a1a">3-3</div>
<div class="t" style="left:152.4px;width:38.90px;top:246.64px;font-size:7.5px;font-weight:bold;color:#1a1a1a;text-align:center;-webkit-text-stroke:0.22px #1a1a1a">1-3</div>
<div class="t" style="left:192.30px;top:246.64px;font-size:7.5px;font-weight:bold;color:#1a1a1a;-webkit-text-stroke:0.22px #1a1a1a">w</div>
<div class="t" style="left:200.40px;top:246.64px;font-size:7.5px;font-weight:bold;color:#1a1a1a;-webkit-text-stroke:0.22px #1a1a1a">1</div>
<div class="t" style="left:5px;width:17.40px;top:256.25px;font-size:7.5px;font-weight:bold;color:#1a1a1a;text-align:center;-webkit-text-stroke:0.22px #1a1a1a">16</div>
<div class="t" style="left:22.4px;width:43.10px;top:256.25px;font-size:7.5px;font-weight:bold;color:#1a1a1a;text-align:center;-webkit-text-stroke:0.22px #1a1a1a">1-0</div>
<div class="t" style="left:65.5px;width:43.50px;top:256.25px;font-size:7.5px;font-weight:bold;color:#1a1a1a;text-align:center;-webkit-text-stroke:0.22px #1a1a1a">3</div>
<div class="t" style="left:109px;width:43.40px;top:256.25px;font-size:7.5px;font-weight:bold;color:#1a1a1a;text-align:center;-webkit-text-stroke:0.22px #1a1a1a">3-0</div>
<div class="t" style="left:152.4px;width:38.90px;top:256.25px;font-size:7.5px;font-weight:bold;color:#1a1a1a;text-align:center;-webkit-text-stroke:0.22px #1a1a1a">3</div>
<div class="t" style="left:192.30px;top:256.25px;font-size:7.5px;font-weight:bold;color:#1a1a1a;-webkit-text-stroke:0.22px #1a1a1a">w</div>
<div class="t" style="left:200.40px;top:256.25px;font-size:7.5px;font-weight:bold;color:#1a1a1a;-webkit-text-stroke:0.22px #1a1a1a">1</div>
<div class="t" style="left:5px;width:17.40px;top:265.86px;font-size:7.5px;font-weight:bold;color:#1a1a1a;text-align:center;-webkit-text-stroke:0.22px #1a1a1a">17</div>
<div class="t" style="left:22.4px;width:43.10px;top:265.86px;font-size:7.5px;font-weight:bold;color:#1a1a1a;text-align:center;-webkit-text-stroke:0.22px #1a1a1a">1-0</div>
<div class="t" style="left:109px;width:43.40px;top:265.86px;font-size:7.5px;font-weight:bold;color:#1a1a1a;text-align:center;-webkit-text-stroke:0.22px #1a1a1a">3-0</div>
<div class="t" style="left:152.4px;width:38.90px;top:265.86px;font-size:7.5px;font-weight:bold;color:#1a1a1a;text-align:center;-webkit-text-stroke:0.22px #1a1a1a">6</div>
<div class="t" style="left:192.30px;top:265.86px;font-size:7.5px;font-weight:bold;color:#1a1a1a;-webkit-text-stroke:0.22px #1a1a1a">w</div>
<div class="t" style="left:200.40px;top:265.86px;font-size:7.5px;font-weight:bold;color:#1a1a1a;-webkit-text-stroke:0.22px #1a1a1a">1</div>
<div class="t" style="left:5px;width:17.40px;top:275.47px;font-size:7.5px;font-weight:bold;color:#1a1a1a;text-align:center;-webkit-text-stroke:0.22px #1a1a1a">18</div>
<div class="t" style="left:22.4px;width:43.10px;top:275.47px;font-size:7.5px;font-weight:bold;color:#1a1a1a;text-align:center;-webkit-text-stroke:0.22px #1a1a1a">1-0</div>
<div class="t" style="left:109px;width:43.40px;top:275.47px;font-size:7.5px;font-weight:bold;color:#1a1a1a;text-align:center;-webkit-text-stroke:0.22px #1a1a1a">3-0</div>
<div class="t" style="left:152.4px;width:38.90px;top:275.47px;font-size:7.5px;font-weight:bold;color:#1a1a1a;text-align:center;-webkit-text-stroke:0.22px #1a1a1a">9</div>
<div class="t" style="left:192.30px;top:275.47px;font-size:7.5px;font-weight:bold;color:#1a1a1a;-webkit-text-stroke:0.22px #1a1a1a">w</div>
<div class="t" style="left:200.40px;top:275.47px;font-size:7.5px;font-weight:bold;color:#1a1a1a;-webkit-text-stroke:0.22px #1a1a1a">1</div>
<div class="t" style="left:5px;width:17.40px;top:285.08px;font-size:7.5px;font-weight:bold;color:#1a1a1a;text-align:center;-webkit-text-stroke:0.22px #1a1a1a">19</div>
<div class="t" style="left:22.4px;width:43.10px;top:285.08px;font-size:7.5px;font-weight:bold;color:#1a1a1a;text-align:center;-webkit-text-stroke:0.22px #1a1a1a">1-0</div>
<div class="t" style="left:109px;width:43.40px;top:285.08px;font-size:7.5px;font-weight:bold;color:#1a1a1a;text-align:center;-webkit-text-stroke:0.22px #1a1a1a">3-0</div>
<div class="t" style="left:152.4px;width:38.90px;top:285.08px;font-size:7.5px;font-weight:bold;color:#1a1a1a;text-align:center;-webkit-text-stroke:0.22px #1a1a1a">1-0</div>
<div class="t" style="left:192.30px;top:285.08px;font-size:7.5px;font-weight:bold;color:#1a1a1a;-webkit-text-stroke:0.22px #1a1a1a">w</div>
<div class="t" style="left:200.40px;top:285.08px;font-size:7.5px;font-weight:bold;color:#1a1a1a;-webkit-text-stroke:0.22px #1a1a1a">3</div>
<div class="t" style="left:5px;width:17.40px;top:294.69px;font-size:7.5px;font-weight:bold;color:#1a1a1a;text-align:center;-webkit-text-stroke:0.22px #1a1a1a">20</div>
<div class="t" style="left:22.4px;width:43.10px;top:294.69px;font-size:7.5px;font-weight:bold;color:#1a1a1a;text-align:center;-webkit-text-stroke:0.22px #1a1a1a">1-0</div>
<div class="t" style="left:109px;width:43.40px;top:294.69px;font-size:7.5px;font-weight:bold;color:#1a1a1a;text-align:center;-webkit-text-stroke:0.22px #1a1a1a">3-0</div>
<div class="t" style="left:152.4px;width:38.90px;top:294.69px;font-size:7.5px;font-weight:bold;color:#1a1a1a;text-align:center;-webkit-text-stroke:0.22px #1a1a1a">1-3</div>
<div class="t" style="left:192.30px;top:294.69px;font-size:7.5px;font-weight:bold;color:#1a1a1a;-webkit-text-stroke:0.22px #1a1a1a">w</div>
<div class="t" style="left:200.40px;top:294.69px;font-size:7.5px;font-weight:bold;color:#1a1a1a;-webkit-text-stroke:0.22px #1a1a1a">1</div>
<div class="t" style="left:5px;width:17.40px;top:304.30px;font-size:7.5px;font-weight:bold;color:#1a1a1a;text-align:center;-webkit-text-stroke:0.22px #1a1a1a">21</div>
<div class="t" style="left:22.4px;width:43.10px;top:304.30px;font-size:7.5px;font-weight:bold;color:#1a1a1a;text-align:center;-webkit-text-stroke:0.22px #1a1a1a">1-3</div>
<div class="t" style="left:65.5px;width:43.50px;top:304.30px;font-size:7.5px;font-weight:bold;color:#1a1a1a;text-align:center;-webkit-text-stroke:0.22px #1a1a1a">3</div>
<div class="t" style="left:109px;width:43.40px;top:304.30px;font-size:7.5px;font-weight:bold;color:#1a1a1a;text-align:center;-webkit-text-stroke:0.22px #1a1a1a">2-9</div>
<div class="t" style="left:152.4px;width:38.90px;top:304.30px;font-size:7.5px;font-weight:bold;color:#1a1a1a;text-align:center;-webkit-text-stroke:0.22px #1a1a1a">3</div>
<div class="t" style="left:192.30px;top:304.30px;font-size:7.5px;font-weight:bold;color:#1a1a1a;-webkit-text-stroke:0.22px #1a1a1a">w</div>
<div class="t" style="left:200.40px;top:304.30px;font-size:7.5px;font-weight:bold;color:#1a1a1a;-webkit-text-stroke:0.22px #1a1a1a">1</div>
<div class="t" style="left:5px;width:17.40px;top:313.91px;font-size:7.5px;font-weight:bold;color:#1a1a1a;text-align:center;-webkit-text-stroke:0.22px #1a1a1a">22</div>
<div class="t" style="left:22.4px;width:43.10px;top:313.91px;font-size:7.5px;font-weight:bold;color:#1a1a1a;text-align:center;-webkit-text-stroke:0.22px #1a1a1a">1-3</div>
<div class="t" style="left:109px;width:43.40px;top:313.91px;font-size:7.5px;font-weight:bold;color:#1a1a1a;text-align:center;-webkit-text-stroke:0.22px #1a1a1a">2-9</div>
<div class="t" style="left:152.4px;width:38.90px;top:313.91px;font-size:7.5px;font-weight:bold;color:#1a1a1a;text-align:center;-webkit-text-stroke:0.22px #1a1a1a">6</div>
<div class="t" style="left:192.30px;top:313.91px;font-size:7.5px;font-weight:bold;color:#1a1a1a;-webkit-text-stroke:0.22px #1a1a1a">w</div>
<div class="t" style="left:200.40px;top:313.91px;font-size:7.5px;font-weight:bold;color:#1a1a1a;-webkit-text-stroke:0.22px #1a1a1a">1</div>
<div class="t" style="left:5px;width:17.40px;top:323.52px;font-size:7.5px;font-weight:bold;color:#1a1a1a;text-align:center;-webkit-text-stroke:0.22px #1a1a1a">23</div>
<div class="t" style="left:22.4px;width:43.10px;top:323.52px;font-size:7.5px;font-weight:bold;color:#1a1a1a;text-align:center;-webkit-text-stroke:0.22px #1a1a1a">1-3</div>
<div class="t" style="left:109px;width:43.40px;top:323.52px;font-size:7.5px;font-weight:bold;color:#1a1a1a;text-align:center;-webkit-text-stroke:0.22px #1a1a1a">2-9</div>
<div class="t" style="left:152.4px;width:38.90px;top:323.52px;font-size:7.5px;font-weight:bold;color:#1a1a1a;text-align:center;-webkit-text-stroke:0.22px #1a1a1a">9</div>
<div class="t" style="left:192.30px;top:323.52px;font-size:7.5px;font-weight:bold;color:#1a1a1a;-webkit-text-stroke:0.22px #1a1a1a">w</div>
<div class="t" style="left:200.40px;top:323.52px;font-size:7.5px;font-weight:bold;color:#1a1a1a;-webkit-text-stroke:0.22px #1a1a1a">3</div>
<div class="t" style="left:5px;width:17.40px;top:333.13px;font-size:7.5px;font-weight:bold;color:#1a1a1a;text-align:center;-webkit-text-stroke:0.22px #1a1a1a">24</div>
<div class="t" style="left:22.4px;width:43.10px;top:333.13px;font-size:7.5px;font-weight:bold;color:#1a1a1a;text-align:center;-webkit-text-stroke:0.22px #1a1a1a">1-3</div>
<div class="t" style="left:109px;width:43.40px;top:333.13px;font-size:7.5px;font-weight:bold;color:#1a1a1a;text-align:center;-webkit-text-stroke:0.22px #1a1a1a">2-9</div>
<div class="t" style="left:152.4px;width:38.90px;top:333.13px;font-size:7.5px;font-weight:bold;color:#1a1a1a;text-align:center;-webkit-text-stroke:0.22px #1a1a1a">1-0</div>
<div class="t" style="left:192.30px;top:333.13px;font-size:7.5px;font-weight:bold;color:#1a1a1a;-webkit-text-stroke:0.22px #1a1a1a">w</div>
<div class="t" style="left:200.40px;top:333.13px;font-size:7.5px;font-weight:bold;color:#1a1a1a;-webkit-text-stroke:0.22px #1a1a1a">1</div>
<div class="t" style="left:5px;width:17.40px;top:342.74px;font-size:7.5px;font-weight:bold;color:#1a1a1a;text-align:center;-webkit-text-stroke:0.22px #1a1a1a">25</div>
<div class="t" style="left:22.4px;width:43.10px;top:342.74px;font-size:7.5px;font-weight:bold;color:#1a1a1a;text-align:center;-webkit-text-stroke:0.22px #1a1a1a">1-3</div>
<div class="t" style="left:109px;width:43.40px;top:342.74px;font-size:7.5px;font-weight:bold;color:#1a1a1a;text-align:center;-webkit-text-stroke:0.22px #1a1a1a">2-9</div>
<div class="t" style="left:152.4px;width:38.90px;top:342.74px;font-size:7.5px;font-weight:bold;color:#1a1a1a;text-align:center;-webkit-text-stroke:0.22px #1a1a1a">1-3</div>
<div class="t" style="left:192.30px;top:342.74px;font-size:7.5px;font-weight:bold;color:#1a1a1a;-webkit-text-stroke:0.22px #1a1a1a">w</div>
<div class="t" style="left:200.40px;top:342.74px;font-size:7.5px;font-weight:bold;color:#1a1a1a;-webkit-text-stroke:0.22px #1a1a1a">1</div>
<div class="t" style="left:5px;width:17.40px;top:352.35px;font-size:7.5px;font-weight:bold;color:#1a1a1a;text-align:center;-webkit-text-stroke:0.22px #1a1a1a">26</div>
<div class="t" style="left:22.4px;width:43.10px;top:352.35px;font-size:7.5px;font-weight:bold;color:#1a1a1a;text-align:center;-webkit-text-stroke:0.22px #1a1a1a">2-0</div>
<div class="t" style="left:65.5px;width:43.50px;top:352.35px;font-size:7.5px;font-weight:bold;color:#1a1a1a;text-align:center;-webkit-text-stroke:0.22px #1a1a1a">9</div>
<div class="t" style="left:109px;width:43.40px;top:352.35px;font-size:7.5px;font-weight:bold;color:#1a1a1a;text-align:center;-webkit-text-stroke:0.22px #1a1a1a">2-0</div>
<div class="t" style="left:152.4px;width:38.90px;top:352.35px;font-size:7.5px;font-weight:bold;color:#1a1a1a;text-align:center;-webkit-text-stroke:0.22px #1a1a1a">9</div>
<div class="t" style="left:192.30px;top:352.35px;font-size:7.5px;font-weight:bold;color:#1a1a1a;-webkit-text-stroke:0.22px #1a1a1a">M</div>
<div class="t" style="left:200.40px;top:352.35px;font-size:7.5px;font-weight:bold;color:#1a1a1a;-webkit-text-stroke:0.22px #1a1a1a">P</div>
<div class="t" style="left:5px;width:17.40px;top:361.96px;font-size:7.5px;font-weight:bold;color:#1a1a1a;text-align:center;-webkit-text-stroke:0.22px #1a1a1a">27</div>
<div class="t" style="left:22.4px;width:43.10px;top:361.96px;font-size:7.5px;font-weight:bold;color:#1a1a1a;text-align:center;-webkit-text-stroke:0.22px #1a1a1a">2-0*7/16</div>
<div class="t" style="left:65.5px;width:43.50px;top:361.96px;font-size:7.5px;font-weight:bold;color:#1a1a1a;text-align:center;-webkit-text-stroke:0.22px #1a1a1a">7/16</div>
<div class="t" style="left:109px;width:43.40px;top:361.96px;font-size:7.5px;font-weight:bold;color:#1a1a1a;text-align:center;-webkit-text-stroke:0.22px #1a1a1a">1-11*9/16</div>
<div class="t" style="left:152.4px;width:38.90px;top:361.96px;font-size:7.5px;font-weight:bold;color:#1a1a1a;text-align:center;-webkit-text-stroke:0.22px #1a1a1a">9</div>
<div class="t" style="left:192.30px;top:361.96px;font-size:7.5px;font-weight:bold;color:#1a1a1a;-webkit-text-stroke:0.22px #1a1a1a">M</div>
<div class="t" style="left:200.40px;top:361.96px;font-size:7.5px;font-weight:bold;color:#1a1a1a;-webkit-text-stroke:0.22px #1a1a1a">1</div>
<div class="t" style="left:5px;width:17.40px;top:371.57px;font-size:7.5px;font-weight:bold;color:#1a1a1a;text-align:center;-webkit-text-stroke:0.22px #1a1a1a">28</div>
<div class="t" style="left:65.5px;width:43.50px;top:371.57px;font-size:7.5px;font-weight:bold;color:#1a1a1a;text-align:center;-webkit-text-stroke:0.22px #1a1a1a">-2-0*7/16</div>
<div class="t" style="left:109px;width:43.40px;top:371.57px;font-size:7.5px;font-weight:bold;color:#1a1a1a;text-align:center;-webkit-text-stroke:0.22px #1a1a1a">4-0</div>
<div class="t" style="left:192.30px;top:371.57px;font-size:7.5px;font-weight:bold;color:#1a1a1a;-webkit-text-stroke:0.22px #1a1a1a">C</div>
<div class="t" style="left:200.40px;top:371.57px;font-size:7.5px;font-weight:bold;color:#1a1a1a;-webkit-text-stroke:0.22px #1a1a1a">P1</div>
<div class="a" style="left:5px;top:596px;width:301.3px;height:1px;background:#fafafa"></div>
<div class="a" style="left:15px;top:601px;width:10px;height:1px;background:#a0a0a0"></div>
<div class="a" style="left:311.3px;top:41.3px;width:346.7px;height:76px;background:#f0f0f0;border-left:1px solid #fafafa"></div>
<div class="t" style="left:298px;width:80px;text-align:center;top:41.89px;font-size:7.2px;font-weight:bold;color:#1a1a1a">Piece Mark</div>
<div class="t" style="left:356px;width:80px;text-align:center;top:41.89px;font-size:7.2px;font-weight:bold;color:#1a1a1a">Shape</div>
<div class="a" style="left:316.6px;top:51px;width:42.80px;height:10.30px;background:#fff;border-top:1.3px solid #8c8c8c;border-left:1.3px solid #8c8c8c;border-right:1px solid #f4f4f4;border-bottom:1px solid #f4f4f4"></div>
<div class="t" style="left:298.0px;width:80px;text-align:center;top:53.14px;font-size:7.2px;font-weight:bold;color:#1a1a1a">P1</div>
<div class="a" style="left:364px;top:51px;width:67.00px;height:11.00px;background:#fff;border-top:1.3px solid #8c8c8c;border-left:1.3px solid #8c8c8c;border-right:1px solid #f4f4f4;border-bottom:1px solid #f4f4f4"></div>
<div class="t" style="left:366px;top:53.49px;font-size:7.2px;font-weight:bold;color:#1a1a1a">P18X1</div>
<div class="a" style="left:421px;top:52.2px;width:10.2px;height:9.6px;background:#f0f0f0;border-left:1px solid #e8e8e8;border-right:1px solid #707070;border-bottom:1px solid #707070"></div>
<svg class="a" style="left:423.2px;top:55.2px" width="6" height="4"><path d="M0.5 0.5 L5 0.5 L2.75 3 Z" fill="#222"/></svg>
<div class="t" style="left:298px;width:80px;text-align:center;top:65.89px;font-size:7.2px;font-weight:bold;color:#1a1a1a">Length</div>
<div class="t" style="left:362.8px;width:80px;text-align:center;top:65.89px;font-size:7.2px;font-weight:bold;color:#1a1a1a">Miter Angles</div>
<div class="a" style="left:316.6px;top:74.7px;width:42.80px;height:10.50px;background:#fff;border-top:1.3px solid #8c8c8c;border-left:1.3px solid #8c8c8c;border-right:1px solid #f4f4f4;border-bottom:1px solid #f4f4f4"></div>
<div class="t" style="left:298.0px;width:80px;text-align:center;top:76.94px;font-size:7.2px;font-weight:bold;color:#1a1a1a">4-0</div>
<div class="t" style="left:324.6px;width:80px;text-align:center;top:79.89px;font-size:7.2px;font-weight:bold;color:#1a1a1a">fil</div>
<div class="a" style="left:374px;top:74.7px;width:28.80px;height:10.50px;background:#fff;border-top:1.3px solid #8c8c8c;border-left:1.3px solid #8c8c8c;border-right:1px solid #f4f4f4;border-bottom:1px solid #f4f4f4"></div>
<div class="t" style="left:348.4px;width:80px;text-align:center;top:76.94px;font-size:7.2px;font-weight:bold;color:#1a1a1a">0</div>
<div class="a" style="left:403.2px;top:74.7px;width:27.80px;height:10.50px;background:#fff;border-top:1.3px solid #8c8c8c;border-left:1.3px solid #8c8c8c;border-right:1px solid #f4f4f4;border-bottom:1px solid #f4f4f4"></div>
<div class="t" style="left:377.1px;width:80px;text-align:center;top:76.94px;font-size:7.2px;font-weight:bold;color:#1a1a1a">0</div>
<div class="t" style="left:317px;top:90.29px;font-size:7.2px;font-weight:bold;color:#1a1a1a">Comments</div>
<div class="t" style="left:348.4px;width:80px;text-align:center;top:90.29px;font-size:7.2px;font-weight:bold;color:#1a1a1a">Left</div>
<div class="t" style="left:380.2px;width:80px;text-align:center;top:90.29px;font-size:7.2px;font-weight:bold;color:#1a1a1a">Right</div>
<div class="a" style="left:316.6px;top:98.9px;width:114.40px;height:10.30px;background:#fff;border-top:1.3px solid #8c8c8c;border-left:1.3px solid #8c8c8c;border-right:1px solid #f4f4f4;border-bottom:1px solid #f4f4f4"></div>
<div class="t" style="left:333.8px;width:80px;text-align:center;top:101.04px;font-size:7.2px;font-weight:bold;color:#1a1a1a">TC12</div>
<div class="a" style="left:437px;top:46.3px;width:168px;height:66.30px;background:#000"></div>
<div class="a" style="left:437px;top:46.3px;width:168px;height:8.40px;background:#a0a0a0"></div>
<div class="a" style="left:437px;top:46.3px;width:11.5px;height:66.30px;background:#a0a0a0"></div>
<div class="a" style="left:436.5px;top:112.2px;width:168.5px;height:1px;background:#5a5a5a"></div>
<div class="a" style="left:437px;top:63.85px;width:168px;height:1px;background:#808080"></div>
<div class="a" style="left:437px;top:73.50px;width:168px;height:1px;background:#808080"></div>
<div class="a" style="left:437px;top:83.15px;width:168px;height:1px;background:#808080"></div>
<div class="a" style="left:437px;top:92.80px;width:168px;height:1px;background:#808080"></div>
<div class="a" style="left:437px;top:102.45px;width:168px;height:1px;background:#808080"></div>
<div class="a" style="left:437px;top:54.20px;width:168px;height:1px;background:#7a7a7a"></div>
<div class="a" style="left:448.00px;top:46.3px;width:1px;height:66.30px;background:#808080"></div>
<div class="a" style="left:500.50px;top:46.3px;width:1px;height:66.30px;background:#808080"></div>
<div class="a" style="left:552.90px;top:46.3px;width:1px;height:66.30px;background:#808080"></div>
<div class="t" style="left:434.8px;width:80px;text-align:center;top:47.29px;font-size:7.2px;font-weight:bold;color:#f4f4f4">Web</div>
<div class="t" style="left:402.7px;width:80px;text-align:center;top:56.51px;font-size:7.2px;font-weight:bold;color:#f0f0f0">1</div>
<div class="t" style="left:434.8px;width:80px;text-align:center;top:56.51px;font-size:7.2px;font-weight:bold;color:#f0f0f0">1</div>
<div class="t" style="left:402.7px;width:80px;text-align:center;top:66.16px;font-size:7.2px;font-weight:bold;color:#f0f000">2</div>
<div class="t" style="left:434.8px;width:80px;text-align:center;top:66.16px;font-size:7.2px;font-weight:bold;color:#f0f000">1*1/16</div>
<div class="t" style="left:402.7px;width:80px;text-align:center;top:75.81px;font-size:7.2px;font-weight:bold;color:#ff2020">3</div>
<div class="t" style="left:434.8px;width:80px;text-align:center;top:75.81px;font-size:7.2px;font-weight:bold;color:#ff2020">1*1/8X2</div>
<div class="a" style="left:609.4px;top:46.3px;width:43.4px;height:14.2px;background:#f0f0f0;border:1px solid #fff;border-right-color:#8a8a8a;border-bottom-color:#8a8a8a;box-shadow:0.6px 0.6px 0 #5a5a5a"></div>
<div class="t" style="left:591px;width:80px;text-align:center;top:50.09px;font-size:7.2px;font-weight:bold;color:#1a1a1a">Std. Tools</div>
<div class="t" style="left:591px;width:80px;text-align:center;top:90.09px;font-size:7.2px;font-weight:bold;color:#1a1a1a">Quantity</div>
<div class="a" style="left:614px;top:98.9px;width:18.80px;height:10.00px;background:#fff;border-top:1.3px solid #8c8c8c;border-left:1.3px solid #8c8c8c;border-right:1px solid #f4f4f4;border-bottom:1px solid #f4f4f4"></div>
<div class="t" style="left:583.4px;width:80px;text-align:center;top:100.89px;font-size:7.2px;font-weight:bold;color:#1a1a1a">10</div>
<div class="a" style="left:638px;top:98.9px;width:10.4px;height:14.7px;background:#f0f0f0;border:1px solid #808080"></div>
<svg class="a" style="left:638px;top:98.9px" width="11" height="15"><path d="M5.2 1.5 L9 6 L1.4 6 Z M1.4 8.5 L9 8.5 L5.2 13 Z" fill="#111"/><path d="M1 7.25 L9.5 7.25" stroke="#777" stroke-width="0.8"/></svg>
<div class="frame" style="left:312px;top:118.2px;width:712px;height:494px;border-left:none;border-top-left-radius:3px"></div>
<div class="t" style="left:318.5px;top:126.2px;font-size:7.2px;color:#b8b8b8">Graphic Display</div>
<div class="a" style="left:316.4px;top:136.3px;width:703.3px;height:470.2px;background:#000"></div>
<div class="a" style="left:0;top:611.8px;width:1024px;height:1.5px;background:#2e2a30"></div>
<svg class="a" style="left:316.4px;top:136.3px" width="703.3" height="470.2" viewBox="316.4 136.3 703.3 470.2">
<path d="M318.6 132 L318.6 144.4 M318.6 133 L321 133 Q323 133.5 323 136.5 Q323 140.4 320.5 140.4 L318.6 140.4 M327.6 132 L327.6 144.6" stroke="#b8b8b8" stroke-width="0.9" fill="none"/>
<rect x="334.4" y="232.0" width="668.3" height="250.3" fill="none" stroke="#6e6e6e" stroke-width="1.4"/>
<path d="M362.2 232 L334.4 258.3 M334.4 454.4 L362.2 482.2 M974.9 232 L1002.7 258.3 M974.8 482.2 L1002.7 455.1" stroke="#079607" stroke-width="1.25" fill="none"/>
<circle cx="376.2" cy="273.3" r="6.9" fill="none" stroke="#969696" stroke-width="1"/>
<path transform="translate(385.20,269.80)" d="M0.5 1.1 Q1.2 0.3 2.4 0.3 Q4.3 0.3 4.3 1.9 Q4.3 3.5 2.2 3.5 Q4.6 3.5 4.6 5.2 Q4.6 7.1 2.4 7.1 Q1 7.1 0.4 6.3" stroke="#088a8a" stroke-width="1.15" fill="none"/>
<circle cx="418.3" cy="273.3" r="6.9" fill="none" stroke="#969696" stroke-width="1"/>
<path transform="translate(427.30,269.80)" d="M0.5 1.1 Q1.2 0.3 2.4 0.3 Q4.3 0.3 4.3 1.9 Q4.3 3.5 2.2 3.5 Q4.6 3.5 4.6 5.2 Q4.6 7.1 2.4 7.1 Q1 7.1 0.4 6.3" stroke="#088a8a" stroke-width="1.15" fill="none"/>
<circle cx="459.9" cy="273.3" r="6.9" fill="none" stroke="#969696" stroke-width="1"/>
<path transform="translate(468.90,269.80)" d="M0.5 1.1 Q1.2 0.3 2.4 0.3 Q4.3 0.3 4.3 1.9 Q4.3 3.5 2.2 3.5 Q4.6 3.5 4.6 5.2 Q4.6 7.1 2.4 7.1 Q1 7.1 0.4 6.3" stroke="#088a8a" stroke-width="1.15" fill="none"/>
<circle cx="501.6" cy="273.3" r="6.9" fill="none" stroke="#969696" stroke-width="1"/>
<path transform="translate(510.60,269.80)" d="M0.5 1.1 Q1.2 0.3 2.4 0.3 Q4.3 0.3 4.3 1.9 Q4.3 3.5 2.2 3.5 Q4.6 3.5 4.6 5.2 Q4.6 7.1 2.4 7.1 Q1 7.1 0.4 6.3" stroke="#088a8a" stroke-width="1.15" fill="none"/>
<circle cx="543.3" cy="273.3" r="6.9" fill="none" stroke="#969696" stroke-width="1"/>
<path transform="translate(552.30,269.80)" d="M0.5 1.1 Q1.2 0.3 2.4 0.3 Q4.3 0.3 4.3 1.9 Q4.3 3.5 2.2 3.5 Q4.6 3.5 4.6 5.2 Q4.6 7.1 2.4 7.1 Q1 7.1 0.4 6.3" stroke="#088a8a" stroke-width="1.15" fill="none"/>
<circle cx="376.2" cy="315.1" r="6.9" fill="none" stroke="#969696" stroke-width="1"/>
<path transform="translate(385.20,311.60)" d="M4.2 1.1 Q3.6 0.3 2.6 0.3 Q0.5 0.3 0.5 3.6 L0.5 4.9 Q0.5 7.1 2.5 7.1 Q4.5 7.1 4.5 5.1 Q4.5 3.2 2.5 3.2 Q0.5 3.2 0.5 4.9" stroke="#088a8a" stroke-width="1.15" fill="none"/>
<circle cx="418.3" cy="315.1" r="6.9" fill="none" stroke="#969696" stroke-width="1"/>
<path transform="translate(427.30,311.60)" d="M4.2 1.1 Q3.6 0.3 2.6 0.3 Q0.5 0.3 0.5 3.6 L0.5 4.9 Q0.5 7.1 2.5 7.1 Q4.5 7.1 4.5 5.1 Q4.5 3.2 2.5 3.2 Q0.5 3.2 0.5 4.9" stroke="#088a8a" stroke-width="1.15" fill="none"/>
<circle cx="459.9" cy="315.1" r="6.9" fill="none" stroke="#d0d0d0" stroke-width="1"/>
<path transform="translate(468.90,311.60)" d="M4.2 1.1 Q3.6 0.3 2.6 0.3 Q0.5 0.3 0.5 3.6 L0.5 4.9 Q0.5 7.1 2.5 7.1 Q4.5 7.1 4.5 5.1 Q4.5 3.2 2.5 3.2 Q0.5 3.2 0.5 4.9" stroke="#b4b4b4" stroke-width="1.15" fill="none"/>
<circle cx="501.6" cy="315.1" r="6.9" fill="none" stroke="#969696" stroke-width="1"/>
<path transform="translate(510.60,311.60)" d="M4.2 1.1 Q3.6 0.3 2.6 0.3 Q0.5 0.3 0.5 3.6 L0.5 4.9 Q0.5 7.1 2.5 7.1 Q4.5 7.1 4.5 5.1 Q4.5 3.2 2.5 3.2 Q0.5 3.2 0.5 4.9" stroke="#088a8a" stroke-width="1.15" fill="none"/>
<circle cx="543.3" cy="315.1" r="6.9" fill="none" stroke="#969696" stroke-width="1"/>
<path transform="translate(552.30,311.60)" d="M4.2 1.1 Q3.6 0.3 2.6 0.3 Q0.5 0.3 0.5 3.6 L0.5 4.9 Q0.5 7.1 2.5 7.1 Q4.5 7.1 4.5 5.1 Q4.5 3.2 2.5 3.2 Q0.5 3.2 0.5 4.9" stroke="#088a8a" stroke-width="1.15" fill="none"/>
<circle cx="376.2" cy="357.0" r="6.9" fill="none" stroke="#969696" stroke-width="1"/>
<path transform="translate(385.20,353.50)" d="M0.8 6.3 Q1.4 7.1 2.4 7.1 Q4.5 7.1 4.5 3.8 L4.5 2.4 Q4.5 0.3 2.5 0.3 Q0.5 0.3 0.5 2.2 Q0.5 4.1 2.5 4.1 Q4.5 4.1 4.5 2.4" stroke="#088a8a" stroke-width="1.15" fill="none"/>
<rect x="409.80" y="342.60" width="17" height="28.8" rx="8.5" ry="8.5" fill="none" stroke="#a80606" stroke-width="1.1"/>
<path transform="translate(427.70,353.50)" d="M0.8 6.3 Q1.4 7.1 2.4 7.1 Q4.5 7.1 4.5 3.8 L4.5 2.4 Q4.5 0.3 2.5 0.3 Q0.5 0.3 0.5 2.2 Q0.5 4.1 2.5 4.1 Q4.5 4.1 4.5 2.4" stroke="#088a8a" stroke-width="1.15" fill="none"/>
<rect x="451.40" y="342.60" width="17" height="28.8" rx="8.5" ry="8.5" fill="none" stroke="#a80606" stroke-width="1.1"/>
<path transform="translate(469.30,353.50)" d="M0.8 6.3 Q1.4 7.1 2.4 7.1 Q4.5 7.1 4.5 3.8 L4.5 2.4 Q4.5 0.3 2.5 0.3 Q0.5 0.3 0.5 2.2 Q0.5 4.1 2.5 4.1 Q4.5 4.1 4.5 2.4" stroke="#088a8a" stroke-width="1.15" fill="none"/>
<circle cx="501.6" cy="357.0" r="6.9" fill="none" stroke="#969696" stroke-width="1"/>
<path transform="translate(510.60,353.50)" d="M0.8 6.3 Q1.4 7.1 2.4 7.1 Q4.5 7.1 4.5 3.8 L4.5 2.4 Q4.5 0.3 2.5 0.3 Q0.5 0.3 0.5 2.2 Q0.5 4.1 2.5 4.1 Q4.5 4.1 4.5 2.4" stroke="#088a8a" stroke-width="1.15" fill="none"/>
<rect x="534.80" y="342.60" width="17" height="28.8" rx="8.5" ry="8.5" fill="none" stroke="#a80606" stroke-width="1.1"/>
<path transform="translate(552.70,353.50)" d="M0.8 6.3 Q1.4 7.1 2.4 7.1 Q4.5 7.1 4.5 3.8 L4.5 2.4 Q4.5 0.3 2.5 0.3 Q0.5 0.3 0.5 2.2 Q0.5 4.1 2.5 4.1 Q4.5 4.1 4.5 2.4" stroke="#088a8a" stroke-width="1.15" fill="none"/>
<rect x="367.70" y="384.30" width="17" height="28.8" rx="8.5" ry="8.5" fill="none" stroke="#a80606" stroke-width="1.1"/>
<path transform="translate(385.60,395.20)" d="M2 0.3 L2 7.2 M2 0.3 L1 1.3 M4.6 3.9 L7.1 3.9 M 8.50 2.30 Q 8.50 0.30 10.50 0.30 Q 12.50 0.30 12.50 2.30 L 12.50 5.10 Q 12.50 7.10 10.50 7.10 Q 8.50 7.10 8.50 5.10 Z" stroke="#088a8a" stroke-width="1.15" fill="none"/>
<circle cx="418.3" cy="398.7" r="6.9" fill="none" stroke="#969696" stroke-width="1"/>
<path transform="translate(427.30,395.20)" d="M2 0.3 L2 7.2 M2 0.3 L1 1.3 M4.6 3.9 L7.1 3.9 M 8.50 2.30 Q 8.50 0.30 10.50 0.30 Q 12.50 0.30 12.50 2.30 L 12.50 5.10 Q 12.50 7.10 10.50 7.10 Q 8.50 7.10 8.50 5.10 Z" stroke="#088a8a" stroke-width="1.15" fill="none"/>
<circle cx="459.9" cy="398.7" r="6.9" fill="none" stroke="#969696" stroke-width="1"/>
<path transform="translate(468.90,395.20)" d="M2 0.3 L2 7.2 M2 0.3 L1 1.3 M4.6 3.9 L7.1 3.9 M 8.50 2.30 Q 8.50 0.30 10.50 0.30 Q 12.50 0.30 12.50 2.30 L 12.50 5.10 Q 12.50 7.10 10.50 7.10 Q 8.50 7.10 8.50 5.10 Z" stroke="#088a8a" stroke-width="1.15" fill="none"/>
<rect x="493.10" y="384.30" width="17" height="28.8" rx="8.5" ry="8.5" fill="none" stroke="#a80606" stroke-width="1.1"/>
<path transform="translate(511.00,395.20)" d="M2 0.3 L2 7.2 M2 0.3 L1 1.3 M4.6 3.9 L7.1 3.9 M 8.50 2.30 Q 8.50 0.30 10.50 0.30 Q 12.50 0.30 12.50 2.30 L 12.50 5.10 Q 12.50 7.10 10.50 7.10 Q 8.50 7.10 8.50 5.10 Z" stroke="#088a8a" stroke-width="1.15" fill="none"/>
<circle cx="543.3" cy="398.7" r="6.9" fill="none" stroke="#969696" stroke-width="1"/>
<path transform="translate(552.30,395.20)" d="M2 0.3 L2 7.2 M2 0.3 L1 1.3 M4.6 3.9 L7.1 3.9 M 8.50 2.30 Q 8.50 0.30 10.50 0.30 Q 12.50 0.30 12.50 2.30 L 12.50 5.10 Q 12.50 7.10 10.50 7.10 Q 8.50 7.10 8.50 5.10 Z" stroke="#088a8a" stroke-width="1.15" fill="none"/>
<circle cx="376.2" cy="440.4" r="6.9" fill="none" stroke="#969696" stroke-width="1"/>
<path transform="translate(385.20,436.90)" d="M2 0.3 L2 7.2 M2 0.3 L1 1.3 M4.6 3.9 L7.1 3.9 M 8.50 1.10 Q 9.20 0.30 10.40 0.30 Q 12.30 0.30 12.30 1.90 Q 12.30 3.50 10.20 3.50 Q 12.60 3.50 12.60 5.20 Q 12.60 7.10 10.40 7.10 Q 9.00 7.10 8.40 6.30" stroke="#088a8a" stroke-width="1.15" fill="none"/>
<circle cx="418.3" cy="440.4" r="6.9" fill="none" stroke="#969696" stroke-width="1"/>
<path transform="translate(427.30,436.90)" d="M2 0.3 L2 7.2 M2 0.3 L1 1.3 M4.6 3.9 L7.1 3.9 M 8.50 1.10 Q 9.20 0.30 10.40 0.30 Q 12.30 0.30 12.30 1.90 Q 12.30 3.50 10.20 3.50 Q 12.60 3.50 12.60 5.20 Q 12.60 7.10 10.40 7.10 Q 9.00 7.10 8.40 6.30" stroke="#088a8a" stroke-width="1.15" fill="none"/>
<circle cx="459.9" cy="440.4" r="6.9" fill="none" stroke="#969696" stroke-width="1"/>
<path transform="translate(468.90,436.90)" d="M2 0.3 L2 7.2 M2 0.3 L1 1.3 M4.6 3.9 L7.1 3.9 M 8.50 1.10 Q 9.20 0.30 10.40 0.30 Q 12.30 0.30 12.30 1.90 Q 12.30 3.50 10.20 3.50 Q 12.60 3.50 12.60 5.20 Q 12.60 7.10 10.40 7.10 Q 9.00 7.10 8.40 6.30" stroke="#088a8a" stroke-width="1.15" fill="none"/>
<circle cx="501.6" cy="440.4" r="6.9" fill="none" stroke="#969696" stroke-width="1"/>
<path transform="translate(510.60,436.90)" d="M2 0.3 L2 7.2 M2 0.3 L1 1.3 M4.6 3.9 L7.1 3.9 M 8.50 1.10 Q 9.20 0.30 10.40 0.30 Q 12.30 0.30 12.30 1.90 Q 12.30 3.50 10.20 3.50 Q 12.60 3.50 12.60 5.20 Q 12.60 7.10 10.40 7.10 Q 9.00 7.10 8.40 6.30" stroke="#088a8a" stroke-width="1.15" fill="none"/>
<circle cx="543.3" cy="440.4" r="6.9" fill="none" stroke="#969696" stroke-width="1"/>
<path transform="translate(552.30,436.90)" d="M2 0.3 L2 7.2 M2 0.3 L1 1.3 M4.6 3.9 L7.1 3.9 M 8.50 1.10 Q 9.20 0.30 10.40 0.30 Q 12.30 0.30 12.30 1.90 Q 12.30 3.50 10.20 3.50 Q 12.60 3.50 12.60 5.20 Q 12.60 7.10 10.40 7.10 Q 9.00 7.10 8.40 6.30" stroke="#088a8a" stroke-width="1.15" fill="none"/>
<path transform="translate(372.60,229.6) rotate(-90)" d="M0.5 1.1 Q1.2 0.3 2.4 0.3 Q4.3 0.3 4.3 1.9 Q4.3 3.5 2.2 3.5 Q4.6 3.5 4.6 5.2 Q4.6 7.1 2.4 7.1 Q1 7.1 0.4 6.3" stroke="#088a8a" stroke-width="1.15" fill="none"/>
<path transform="translate(414.70,229.6) rotate(-90)" d="M4.2 1.1 Q3.6 0.3 2.6 0.3 Q0.5 0.3 0.5 3.6 L0.5 4.9 Q0.5 7.1 2.5 7.1 Q4.5 7.1 4.5 5.1 Q4.5 3.2 2.5 3.2 Q0.5 3.2 0.5 4.9" stroke="#088a8a" stroke-width="1.15" fill="none"/>
<path transform="translate(456.30,229.6) rotate(-90)" d="M0.8 6.3 Q1.4 7.1 2.4 7.1 Q4.5 7.1 4.5 3.8 L4.5 2.4 Q4.5 0.3 2.5 0.3 Q0.5 0.3 0.5 2.2 Q0.5 4.1 2.5 4.1 Q4.5 4.1 4.5 2.4" stroke="#088a8a" stroke-width="1.15" fill="none"/>
<path transform="translate(498.00,229.6) rotate(-90)" d="M2 0.3 L2 7.2 M2 0.3 L1 1.3 M4.6 3.9 L7.1 3.9 M 8.50 2.30 Q 8.50 0.30 10.50 0.30 Q 12.50 0.30 12.50 2.30 L 12.50 5.10 Q 12.50 7.10 10.50 7.10 Q 8.50 7.10 8.50 5.10 Z" stroke="#088a8a" stroke-width="1.15" fill="none"/>
<path transform="translate(539.70,229.6) rotate(-90)" d="M2 0.3 L2 7.2 M2 0.3 L1 1.3 M4.6 3.9 L7.1 3.9 M 8.50 1.10 Q 9.20 0.30 10.40 0.30 Q 12.30 0.30 12.30 1.90 Q 12.30 3.50 10.20 3.50 Q 12.60 3.50 12.60 5.20 Q 12.60 7.10 10.40 7.10 Q 9.00 7.10 8.40 6.30" stroke="#088a8a" stroke-width="1.15" fill="none"/>
<path d="M667.9 356.6 L667.9 348.6 L670.4 348.6 Q671.7 348.6 671.7 350.5 Q671.7 352.4 670.4 352.4 L667.9 352.4 M676.6 356.6 L676.6 348.4 L675.2 349.8" stroke="#0a8c0a" stroke-width="1.15" fill="none"/>
<path d="M672.6 473 L672.6 486.8 M672.6 473 L668 481.6 L675.2 481.6 M677.6 479.4 L683.6 479.4 M685.2 476.6 Q685.2 472.8 689.05 472.8 Q692.9 472.8 692.9 476.6 L692.9 482.9 Q692.9 486.7 689.05 486.7 Q685.2 486.7 685.2 482.9 Z" stroke="#c8c8c8" stroke-width="0.95" fill="none"/>
<g transform="translate(334.4,479.8) rotate(-90)" stroke="#a0a0a0" stroke-width="0.95" fill="none"><path d="M2.2 0 L2.2 -13.4 L0 -11.4 M6.5 -7 L12.8 -7 M21.6 -12.4 Q20 -14.2 18 -14.2 Q15.3 -14.2 15.3 -9 L15.3 -4 Q15.3 0 18.8 0 Q22.3 0 22.3 -3.6 Q22.3 -7.2 18.8 -7.2 Q15.3 -7.2 15.3 -4"/></g>
</svg>
</body></html>
